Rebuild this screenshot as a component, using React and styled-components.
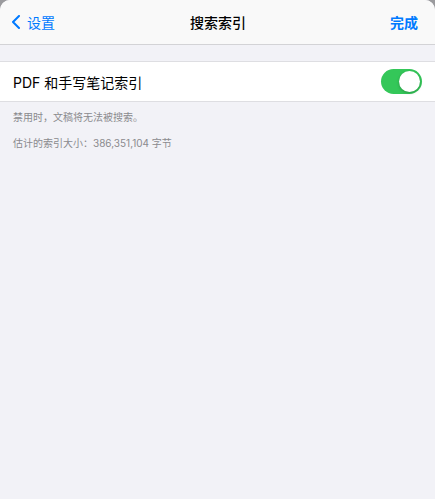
import React, { useState } from "react";
import styled, { createGlobalStyle } from "styled-components";

const GlobalStyle = createGlobalStyle`
  html, body {
    margin: 0;
    padding: 0;
    background: #9b9b9e;
  }
  body {
    font-family: Inter, "Noto Sans CJK SC", sans-serif;
    -webkit-font-smoothing: antialiased;
  }
`;

const Sheet = styled.div`
  min-height: 499px;
  background: #f2f2f7;
  border-radius: 10px 10px 0 0;
  overflow: hidden;
`;

const NavBar = styled.header`
  height: 44px;
  background: #f9f9f9;
  border-bottom: 1px solid #d3d3d6;
  display: grid;
  grid-template-columns: 1fr auto 1fr;
  align-items: center;
  padding: 0 17px 0 11px;
`;

const BackButton = styled.button`
  justify-self: start;
  display: flex;
  align-items: center;
  gap: 6px;
  border: 0;
  background: none;
  padding: 0;
  color: #007aff;
  font: inherit;
  font-size: 14px;
  cursor: pointer;
`;

const Title = styled.h1`
  margin: 0 0 0 7px;
  font-size: 14px;
  font-weight: 500;
  color: #000;
`;

const DoneButton = styled.button`
  justify-self: end;
  border: 0;
  background: none;
  padding: 0;
  color: #007aff;
  font: inherit;
  font-size: 14px;
  font-weight: 600;
  cursor: pointer;
`;

const Group = styled.section`
  margin-top: 16px;
  background: #fff;
  border-top: 1px solid #dedee2;
  border-bottom: 1px solid #dedee2;
`;

const Row = styled.div`
  height: 39px;
  display: flex;
  align-items: center;
  justify-content: space-between;
  padding: 0 13px 0 13px;
`;

const RowLabel = styled.span`
  font-size: 14px;
  color: #000;
`;

const Track = styled.button`
  position: relative;
  width: 41px;
  height: 25px;
  border-radius: 13px;
  border: 0;
  padding: 0;
  background: ${(p) => (p.$on ? "#34c759" : "#e9e9eb")};
  cursor: pointer;
  transition: background 0.2s;
`;

const Knob = styled.span`
  position: absolute;
  top: 2px;
  left: ${(p) => (p.$on ? "18px" : "2px")};
  width: 21px;
  height: 21px;
  border-radius: 50%;
  background: #fff;
  box-shadow: 0 1px 3px rgba(0, 0, 0, 0.25);
  transition: left 0.2s;
`;

const Footer = styled.div`
  padding: 8px 13px 0;
`;

const Note = styled.p`
  margin: 0 0 12px;
  font-size: 10px;
  line-height: 14px;
  color: #8a8a8e;
`;

function Chevron() {
  return (
    <svg width="10" height="14" viewBox="0 0 10 14" fill="none">
      <path
        d="M8 1 L2 7 L8 13"
        stroke="#007aff"
        strokeWidth="2"
        strokeLinecap="round"
        strokeLinejoin="round"
      />
    </svg>
  );
}

export default function App() {
  const [on, setOn] = useState(true);
  return (
    <>
      <GlobalStyle />
      <Sheet>
        <NavBar>
          <BackButton>
            <Chevron />
            设置
          </BackButton>
          <Title>搜索索引</Title>
          <DoneButton>完成</DoneButton>
        </NavBar>
        <Group>
          <Row>
            <RowLabel>PDF 和手写笔记索引</RowLabel>
            <Track $on={on} onClick={() => setOn(!on)} aria-pressed={on}>
              <Knob $on={on} />
            </Track>
          </Row>
        </Group>
        <Footer>
          <Note>禁用时，文稿将无法被搜索。</Note>
          <Note>估计的索引大小：386,351,104 字节</Note>
        </Footer>
      </Sheet>
    </>
  );
}
